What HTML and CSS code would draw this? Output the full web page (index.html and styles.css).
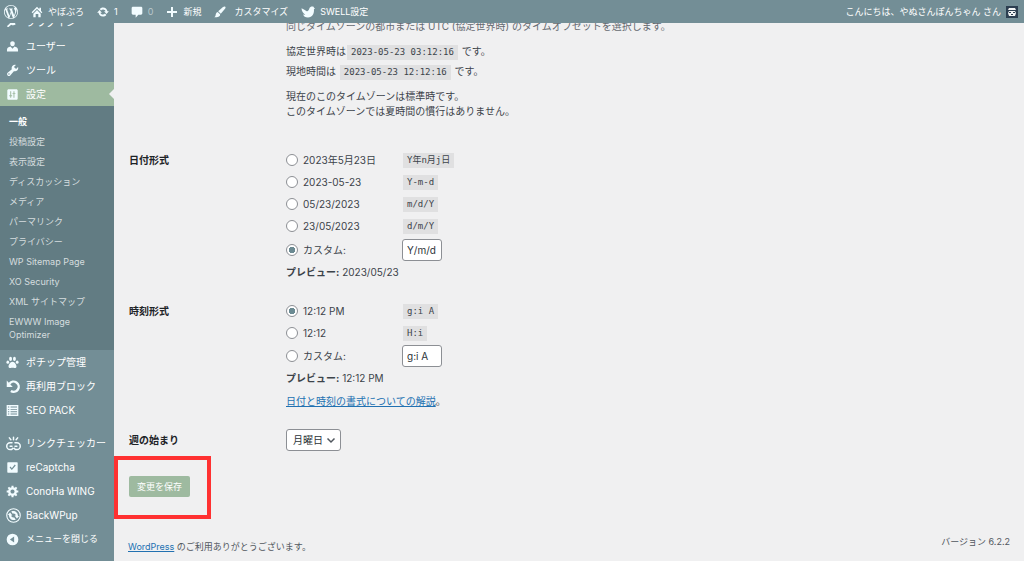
FILE: index.html
```html
<!DOCTYPE html>
<html lang="ja">
<head>
<meta charset="utf-8">
<meta name="viewport" content="width=device-width, initial-scale=1">
<title>一般設定</title>
<link rel="stylesheet" href="styles.css">
</head>
<body>
<header class="adminbar">
  <a class="bar-item bar-logo" href="#" aria-label="WordPress"><svg class="icon icon-lg" viewBox="0 0 20 20"><path d="M20 10c0-5.510-4.490-10-10-10C4.480 0 0 4.490 0 10c0 5.520 4.480 10 10 10 5.510 0 10-4.480 10-10zM7.780 15.370L4.370 6.220c.55-.02 1.170-.08 1.170-.08.5-.06.44-1.130-.06-1.110 0 0-1.450.11-2.370.11-.18 0-.37 0-.58-.01C4.120 2.690 6.870 1.110 10 1.110c2.330 0 4.450.87 6.050 2.340-.68-.11-1.650.39-1.650 1.580 0 .74.45 1.360.9 2.100.35.61.55 1.360.55 2.460 0 1.490-1.400 5-1.400 5l-3.030-8.370c.54-.02.82-.17.82-.17.5-.05.44-1.250-.06-1.220 0 0-1.440.12-2.380.12-.87 0-2.330-.12-2.330-.12-.5-.03-.56 1.200-.06 1.220l.92.08 1.260 3.410zM17.410 10c.24-.64.74-1.870.43-4.250.7 1.290 1.050 2.710 1.050 4.250 0 3.290-1.730 6.240-4.400 7.780.97-2.590 1.940-5.200 2.920-7.780zM6.100 18.090C3.120 16.650 1.110 13.530 1.110 10c0-1.300.23-2.480.72-3.590C3.250 10.300 4.670 14.200 6.100 18.090zm4.030-6.630l2.580 6.980c-.86.29-1.760.45-2.710.45-.79 0-1.570-.11-2.290-.33.81-2.380 1.620-4.740 2.420-7.100z"/></svg></a>
  <a class="bar-item" href="#"><svg class="icon" viewBox="1 1 18 18"><path d="M16 8.500l2 2-1.400 1.400L10 5.300l-6.600 6.600L2 10.500 10 2.200l3.500 3.600V3.500H16zM10 7l5.500 5.500V18H12v-5H8v5H4.500v-5.500z"/></svg>やぼぶろ</a>
  <a class="bar-item" href="#"><svg class="icon" viewBox="0 0 20 20"><path d="M10.200 2.500c3.700 0 6.600 2.600 7.200 6.300h2.400l-4 4.700-4-4.700h2.500c-.5-1.800-2-3-4.100-3-1.500 0-2.700.7-3.500 1.700L4.400 5.200C5.700 3.500 7.800 2.500 10.200 2.500zM9.800 17.500c-3.700 0-6.600-2.600-7.200-6.300H.2l4-4.700 4 4.700H5.700c.5 1.800 2 3 4.100 3 1.500 0 2.700-.7 3.500-1.700l2.300 2.300c-1.300 1.700-3.400 2.700-5.800 2.700z"/></svg>1</a>
  <a class="bar-item bar-muted" href="#"><svg class="icon" viewBox="1 1 18 18"><path d="M4 2h12c1.100 0 2 .9 2 2v8c0 1.100-.9 2-2 2h-4l-4 4.500V14H4c-1.100 0-2-.9-2-2V4c0-1.100.9-2 2-2z"/></svg>0</a>
  <a class="bar-item" href="#"><svg class="icon" viewBox="1 1 18 18"><path d="M17.500 8.500v3h-6v6h-3v-6h-6v-3h6v-6h3v6z"/></svg>新規</a>
  <a class="bar-item bar-wide" href="#"><svg class="icon" viewBox="0 0 20 20"><path d="M18.800 1.200c1 1 .3 2.400-.8 3.700L11.300 13 7 8.800l8-7c1.200-1 2.800-1.600 3.800-.6zM6.200 9.800l4 4c.3 2.800-2 5.500-9.700 5 2.500-1.400 1.900-3.400 2.700-5.900.5-1.700 1.700-2.900 3-3.100z"/></svg>カスタマイズ</a>
  <a class="bar-item" href="#"><svg class="icon icon-swell" viewBox="0 0 26 22"><path d="M1 4c3 1 6 3 9 5 2 1 4 0 5-3 1-4 4-5 6-5s3 1 3 2l2 1-2 2c1 8-3 15-11 15-5 0-8-2-9-6 1 1 3 1 4 1C4 13 1 9 1 4z"/></svg>SWELL設定</a>
  <a class="bar-item bar-account" href="#">こんにちは、やぬさんぽんちゃん さん<svg class="avatar" viewBox="0 0 12 12"><path fill="#2c3e50" d="M0 0h12v12H0z"/><path fill="#f2f4f4" d="M3 2h6l1 2H2zM3 5h6l1 2-1 3H3L2 7z"/><path fill="#2c3e50" d="M3 6h2v1H3zm4 0h2v1H7zM5 8h2v1H5z"/></svg></a>
</header>

<div class="layout">
  <nav class="sidebar" aria-label="メインメニュー">
    <a class="menu-item" href="#"><svg class="icon" viewBox="0 0 20 20"><path d="M13 4.500L9.800 7.700l2.600 2.600L15.600 7l1.400 1.400-3.200 3.200 1.200 1.200c-2 2-5 2-7 .7L4 17H2v-2l4-3.500c-1.300-2-1.300-5 .7-7L8.400 6.300 11.600 3z"/></svg>プラグイン</a>
    <a class="menu-item" href="#"><svg class="icon" viewBox="0 0 20 20"><path d="M10 9.500c-2.200 0-3.500-1.600-3.500-4C6.500 3.300 8 2 10 2s3.500 1.300 3.500 3.500c0 2.400-1.300 4-3.500 4zM7 10l3 3.500 3-3.500c3 .7 5.500 2 5.500 5v2.500h-17V15c0-3 2.500-4.300 5.500-5z"/></svg>ユーザー</a>
    <a class="menu-item" href="#"><svg class="icon" viewBox="0 0 20 20"><path fill-rule="evenodd" d="M17.500 9.800c-1.500 1.500-3.600 1.900-5.400 1.200l-5.600 6.600c-1.100 1.100-2.900 1.100-4 0s-1.100-2.900 0-4L9 8c-.7-1.800-.3-3.900 1.200-5.400 1.400-1.400 3.300-1.700 5-1.100l-3 3 3.300 3.300 3-3c.6 1.700.3 3.600-1 5zM3.800 16.200c.4.400 1.100.4 1.500 0s.4-1.100 0-1.500-1.100-.4-1.500 0-.4 1.100 0 1.500z"/></svg>ツール</a>
    <a class="menu-item is-current" href="#"><svg class="icon" viewBox="0 0 20 20"><path fill-rule="evenodd" d="M18 16V4c0-1.100-.9-2-2-2H4c-1.100 0-2 .9-2 2v12c0 1.100.9 2 2 2h12c1.100 0 2-.9 2-2zM8 11h1.500v1.500H8V15H6.500v-2.500H5V11h1.500V5H8zm5-2h1.500V7.500H13V5h-1.500v2.500H10V9h1.500v6H13z"/></svg>設定</a>
    <div class="submenu">
      <a class="sub-item is-active" href="#">一般</a>
      <a class="sub-item" href="#">投稿設定</a>
      <a class="sub-item" href="#">表示設定</a>
      <a class="sub-item" href="#">ディスカッション</a>
      <a class="sub-item" href="#">メディア</a>
      <a class="sub-item" href="#">パーマリンク</a>
      <a class="sub-item" href="#">プライバシー</a>
      <a class="sub-item" href="#">WP Sitemap Page</a>
      <a class="sub-item" href="#">XO Security</a>
      <a class="sub-item" href="#">XML サイトマップ</a>
      <a class="sub-item" href="#">EWWW Image Optimizer</a>
    </div>
    <a class="menu-item" href="#"><svg class="icon" viewBox="1 1 18 18"><ellipse cx="7.300" cy="5" rx="2" ry="2.800"/><ellipse cx="12.700" cy="5" rx="2" ry="2.800"/><ellipse cx="3.500" cy="9.500" rx="1.900" ry="2.400"/><ellipse cx="16.500" cy="9.500" rx="1.900" ry="2.400"/><path d="M10 9c3 0 5.500 4.500 5.500 6.500s-2 2.500-3 2-4-.5-5 0-3 0-3-2S7 9 10 9z"/></svg>ポチップ管理</a>
    <a class="menu-item" href="#"><svg class="icon icon-lg" viewBox="0 0 20 20"><path fill="none" stroke="currentColor" stroke-width="3.200" d="M4.500 6.500A6.800 6.800 0 1 1 6.500 16"/><path d="M1 2v8.500h8z"/></svg>再利用ブロック</a>
    <a class="menu-item" href="#"><svg class="icon" viewBox="0 0 20 20"><path fill-rule="evenodd" d="M1 1.500h18v17H1zM3 4v1.500h2V4zm4 0v1.500h10V4zM3 7.500V9h2V7.500zm4 0V9h10V7.500zM3 11v1.500h2V11zm4 0v1.500h10V11zm-4 3.500V16h2v-1.500zm4 0V16h10v-1.500z"/></svg>SEO PACK</a>
    <a class="menu-item menu-group" href="#"><svg class="icon icon-lg" viewBox="0 0 20 20"><g fill="none" stroke="currentColor" stroke-width="2" stroke-linecap="round"><path d="M8 9H5.500a4.500 4.500 0 0 0 0 9h2L9 16.500M12 9h2.500a4.500 4.500 0 0 1 0 9h-2L11 16.500M5.500 13.500H8M12 13.500h2.500M10 1.500v3.500M4.500 2.500l2 2.500M15.500 2.500l-2 2.500"/></g></svg>リンクチェッカー</a>
    <a class="menu-item" href="#"><svg class="icon" viewBox="0 0 20 20"><path fill-rule="evenodd" d="M3 2h14a1 1 0 0 1 1 1v14a1 1 0 0 1-1 1H3a1 1 0 0 1-1-1V3a1 1 0 0 1 1-1zm2.500 8L9 14l6-7-1.500-1.500L9 11 7 8.500z"/></svg>reCaptcha</a>
    <a class="menu-item" href="#"><svg class="icon" viewBox="0 1 19 19"><path fill-rule="evenodd" d="M18 12h-2.180c-.17.700-.44 1.350-.81 1.930l1.540 1.540-2.100 2.100-1.540-1.540c-.58.36-1.230.63-1.910.79V19H8v-2.180c-.68-.16-1.330-.43-1.910-.79l-1.540 1.540-2.120-2.120 1.540-1.540c-.36-.58-.63-1.230-.79-1.910H1V9.030h2.170c.16-.7.44-1.350.8-1.940L2.430 5.550l2.100-2.100 1.540 1.540c.58-.37 1.240-.64 1.930-.81V2h3v2.180c.68.16 1.330.43 1.910.79l1.540-1.540 2.120 2.120-1.540 1.540c.36.590.64 1.240.8 1.940H18zm-8.500 1.500c1.660 0 3-1.340 3-3s-1.340-3-3-3-3 1.340-3 3 1.340 3 3 3z"/></svg>ConoHa WING</a>
    <a class="menu-item" href="#"><svg class="icon icon-lg" viewBox="0 0 20 20"><circle cx="10" cy="10" r="9" fill="none" stroke="currentColor" stroke-width="1.500"/><path d="M7 4.500c4-2 9 1 9 6l1.500.5-3 3-3-4 1.500 0c0-2-2-3-4-2.500zM13 15.500c-4 2-9-1-9-6L2.500 9l3-3 3 4L7 10c0 2 2 3 4 2.500z"/></svg>BackWPup</a>
    <button class="menu-item menu-collapse" type="button"><svg class="icon" viewBox="0 0 20 20"><path fill-rule="evenodd" d="M10 1a9 9 0 1 1 0 18 9 9 0 0 1 0-18zm2.500 4.500L6 10l6.500 4.500z"/></svg>メニューを閉じる</button>
  </nav>

  <main class="content">
    <form class="settings">
      <section class="row">
        <div class="field-start">
          <p class="description">同じタイムゾーンの都市または UTC (協定世界時) のタイムオフセットを選択します。</p>
          <div class="clocks">
            <p>協定世界時は<code>2023-05-23 03:12:16</code> です。</p>
            <p>現地時間は <code>2023-05-23 12:12:16</code> です。</p>
          </div>
          <p class="note">現在のこのタイムゾーンは標準時です。<br>このタイムゾーンでは夏時間の慣行はありません。</p>
        </div>
      </section>

      <section class="row date-row" role="radiogroup" aria-labelledby="date-title">
        <h2 class="row-title" id="date-title">日付形式</h2>
        <div>
          <div class="option"><label><input type="radio" name="date">2023年5月23日</label><code>Y年n月j日</code></div>
          <div class="option"><label><input type="radio" name="date">2023-05-23</label><code>Y-m-d</code></div>
          <div class="option"><label><input type="radio" name="date">05/23/2023</label><code>m/d/Y</code></div>
          <div class="option"><label><input type="radio" name="date">23/05/2023</label><code>d/m/Y</code></div>
          <div class="option option-custom"><label><input type="radio" name="date" checked>カスタム:</label><input class="text" type="text" value="Y/m/d" aria-label="カスタム日付形式"></div>
          <p class="preview"><strong>プレビュー:</strong> 2023/05/23</p>
        </div>
      </section>

      <section class="row time-row" role="radiogroup" aria-labelledby="time-title">
        <h2 class="row-title" id="time-title">時刻形式</h2>
        <div>
          <div class="option"><label><input type="radio" name="time" checked>12:12 PM</label><code>g:i A</code></div>
          <div class="option"><label><input type="radio" name="time">12:12</label><code>H:i</code></div>
          <div class="option option-custom"><label><input type="radio" name="time">カスタム:</label><input class="text" type="text" value="g:i A" aria-label="カスタム時刻形式"></div>
          <p class="preview"><strong>プレビュー:</strong> 12:12 PM</p>
          <p class="help"><a href="#">日付と時刻の書式についての解説</a>。</p>
        </div>
      </section>

      <section class="row week-row">
        <label class="row-title" for="week">週の始まり</label>
        <div>
          <span class="select">
            <select id="week"><option>月曜日</option></select>
            <svg class="chevron" viewBox="0 0 10 10"><path fill="none" stroke="#50575e" stroke-width="1.500" d="M1.500 3.500L5 7l3.500-3.500"/></svg>
          </span>
        </div>
      </section>

      <div class="submit"><button class="primary" type="submit">変更を保存</button></div>
    </form>

    <footer class="footer">
      <p><a href="#">WordPress</a> のご利用ありがとうございます。</p>
      <p class="version">バージョン 6.2.2</p>
    </footer>
  </main>
</div>
</body>
</html>
```
FILE: styles.css
```css
* { box-sizing: border-box; }

body {
  margin: 0;
  background: #f0f0f1;
  color: #3c434a;
  font: 10px/16px Inter, "Noto Sans CJK JP", sans-serif;
}

p, h2 { margin: 0; }
a { color: #2271b1; }
button, input, select { font: inherit; color: inherit; }

.icon {
  flex: none;
  width: 12px;
  height: 12px;
  fill: currentColor;
  color: #f2fcff;
}
.icon-lg { width: 14px; height: 14px; }
.icon-swell { width: 14px; height: 12px; }

/* Admin bar */
.adminbar {
  position: fixed;
  z-index: 2;
  top: 0;
  left: 0;
  right: 0;
  display: flex;
  gap: 13px;
  height: 23px;
  padding: 0 6px 0 4px;
  background: #738e96;
  font-size: 9px;
}
.bar-item {
  display: flex;
  align-items: center;
  gap: 6px;
  color: #fff;
  text-decoration: none;
  white-space: nowrap;
}
.bar-item + .bar-item { gap: 5px; }
.bar-muted { color: #b9c7cb; }
.bar-account { margin-left: auto; }
.bar-item.bar-wide { gap: 8px; }
.avatar { width: 12px; height: 12px; }

.layout {
  display: flex;
  min-height: 100vh;
}

/* Side menu */
.sidebar {
  flex: none;
  width: 114px;
  padding-top: 10px;
  background: #738e96;
}
.menu-item {
  position: relative;
  display: flex;
  align-items: center;
  gap: 7px;
  width: 100%;
  height: 24px;
  padding-left: 6px;
  border: 0;
  background: none;
  color: #fff;
  text-decoration: none;
  white-space: nowrap;
}
.menu-item .icon { width: 13px; height: 13px; }
.menu-item .icon-lg {
  width: 15px;
  height: 15px;
  margin-right: -2px;
}
.menu-group { margin-top: 9px; }
.menu-collapse { font-size: 9px; }
.is-current { background: #9ebaa0; }
.is-current::after {
  content: "";
  position: absolute;
  right: 0;
  top: 7px;
  border: 5px solid transparent;
  border-left: 0;
  border-right-color: #f0f0f1;
}
.submenu {
  padding: 5px 0 6px;
  background: #627c83;
  font-size: 9px;
  line-height: 13px;
}
.sub-item {
  display: block;
  padding: 4px 24px 3px 9px;
  color: #d5dddf;
  text-decoration: none;
}
.sub-item.is-active { color: #fff; font-weight: 700; }

/* Settings form */
.content {
  flex: 1;
  min-width: 0;
  padding: 18px 14px 0 15px;
}
.row {
  display: grid;
  grid-template-columns: 157px 1fr;
}
.row-title {
  color: #1d2327;
  font-size: 10px;
  font-weight: 700;
  line-height: 22px;
}
.field-start { grid-column: 2; }
.description { color: #646970; }
.clocks {
  margin: 7px 0 8px;
  line-height: 20px;
}
.note { line-height: 15px; }

code {
  display: inline-block;
  justify-self: start;
  margin: 0 1px;
  padding: 0 4px;
  background: #e0e0e1;
  font: 9px/15px "DejaVu Sans Mono", "Noto Sans CJK JP", monospace;
}

.date-row { margin-top: 30px; }
.time-row { margin-top: 18px; }
.week-row { margin-top: 20px; }

.option {
  display: grid;
  grid-template-columns: 116px 1fr;
  align-items: center;
  height: 22px;
}
.option-custom { height: 24px; }
.date-row .option-custom { margin-top: 1px; }
.option label {
  display: flex;
  align-items: center;
  gap: 5px;
}
input[type="radio"] {
  appearance: none;
  width: 12px;
  height: 12px;
  margin: 0;
  border: 1px solid #8c8f94;
  border-radius: 50%;
  background: #fff;
}
input[type="radio"]:checked {
  background: radial-gradient(circle, #6b8a92 0 3px, #fff 3px);
}
.text {
  width: 40px;
  height: 22px;
  padding: 0 4px;
  border: 1px solid #8c8f94;
  border-radius: 3px;
  background: #fff;
  color: #2c3338;
}
.preview { line-height: 20px; }
.help { margin-top: 5px; }

.select {
  position: relative;
  display: inline-block;
}
.select select {
  display: block;
  appearance: none;
  height: 22px;
  padding: 0 17px 0 6px;
  border: 1px solid #8c8f94;
  border-radius: 3px;
  background: #fff;
  color: #2c3338;
}
.chevron {
  position: absolute;
  right: 5px;
  top: 6px;
  width: 10px;
  height: 10px;
  pointer-events: none;
}

.submit {
  width: fit-content;
  margin: 5px 0 0 -15px;
  padding: 16px 17px 18px 11px;
  border: 4px solid #ff3131;
}
.primary {
  display: block;
  height: 21px;
  padding: 0 8px;
  border: 0;
  border-radius: 2px;
  background: #9ebaa0;
  color: #fff;
  font-size: 9px;
}

.footer {
  display: flex;
  justify-content: space-between;
  align-items: flex-start;
  margin: 16px 0 0 -1px;
  font-size: 9px;
  line-height: 14px;
  color: #50575e;
}
.footer p:first-child { padding-top: 5px; }
```
